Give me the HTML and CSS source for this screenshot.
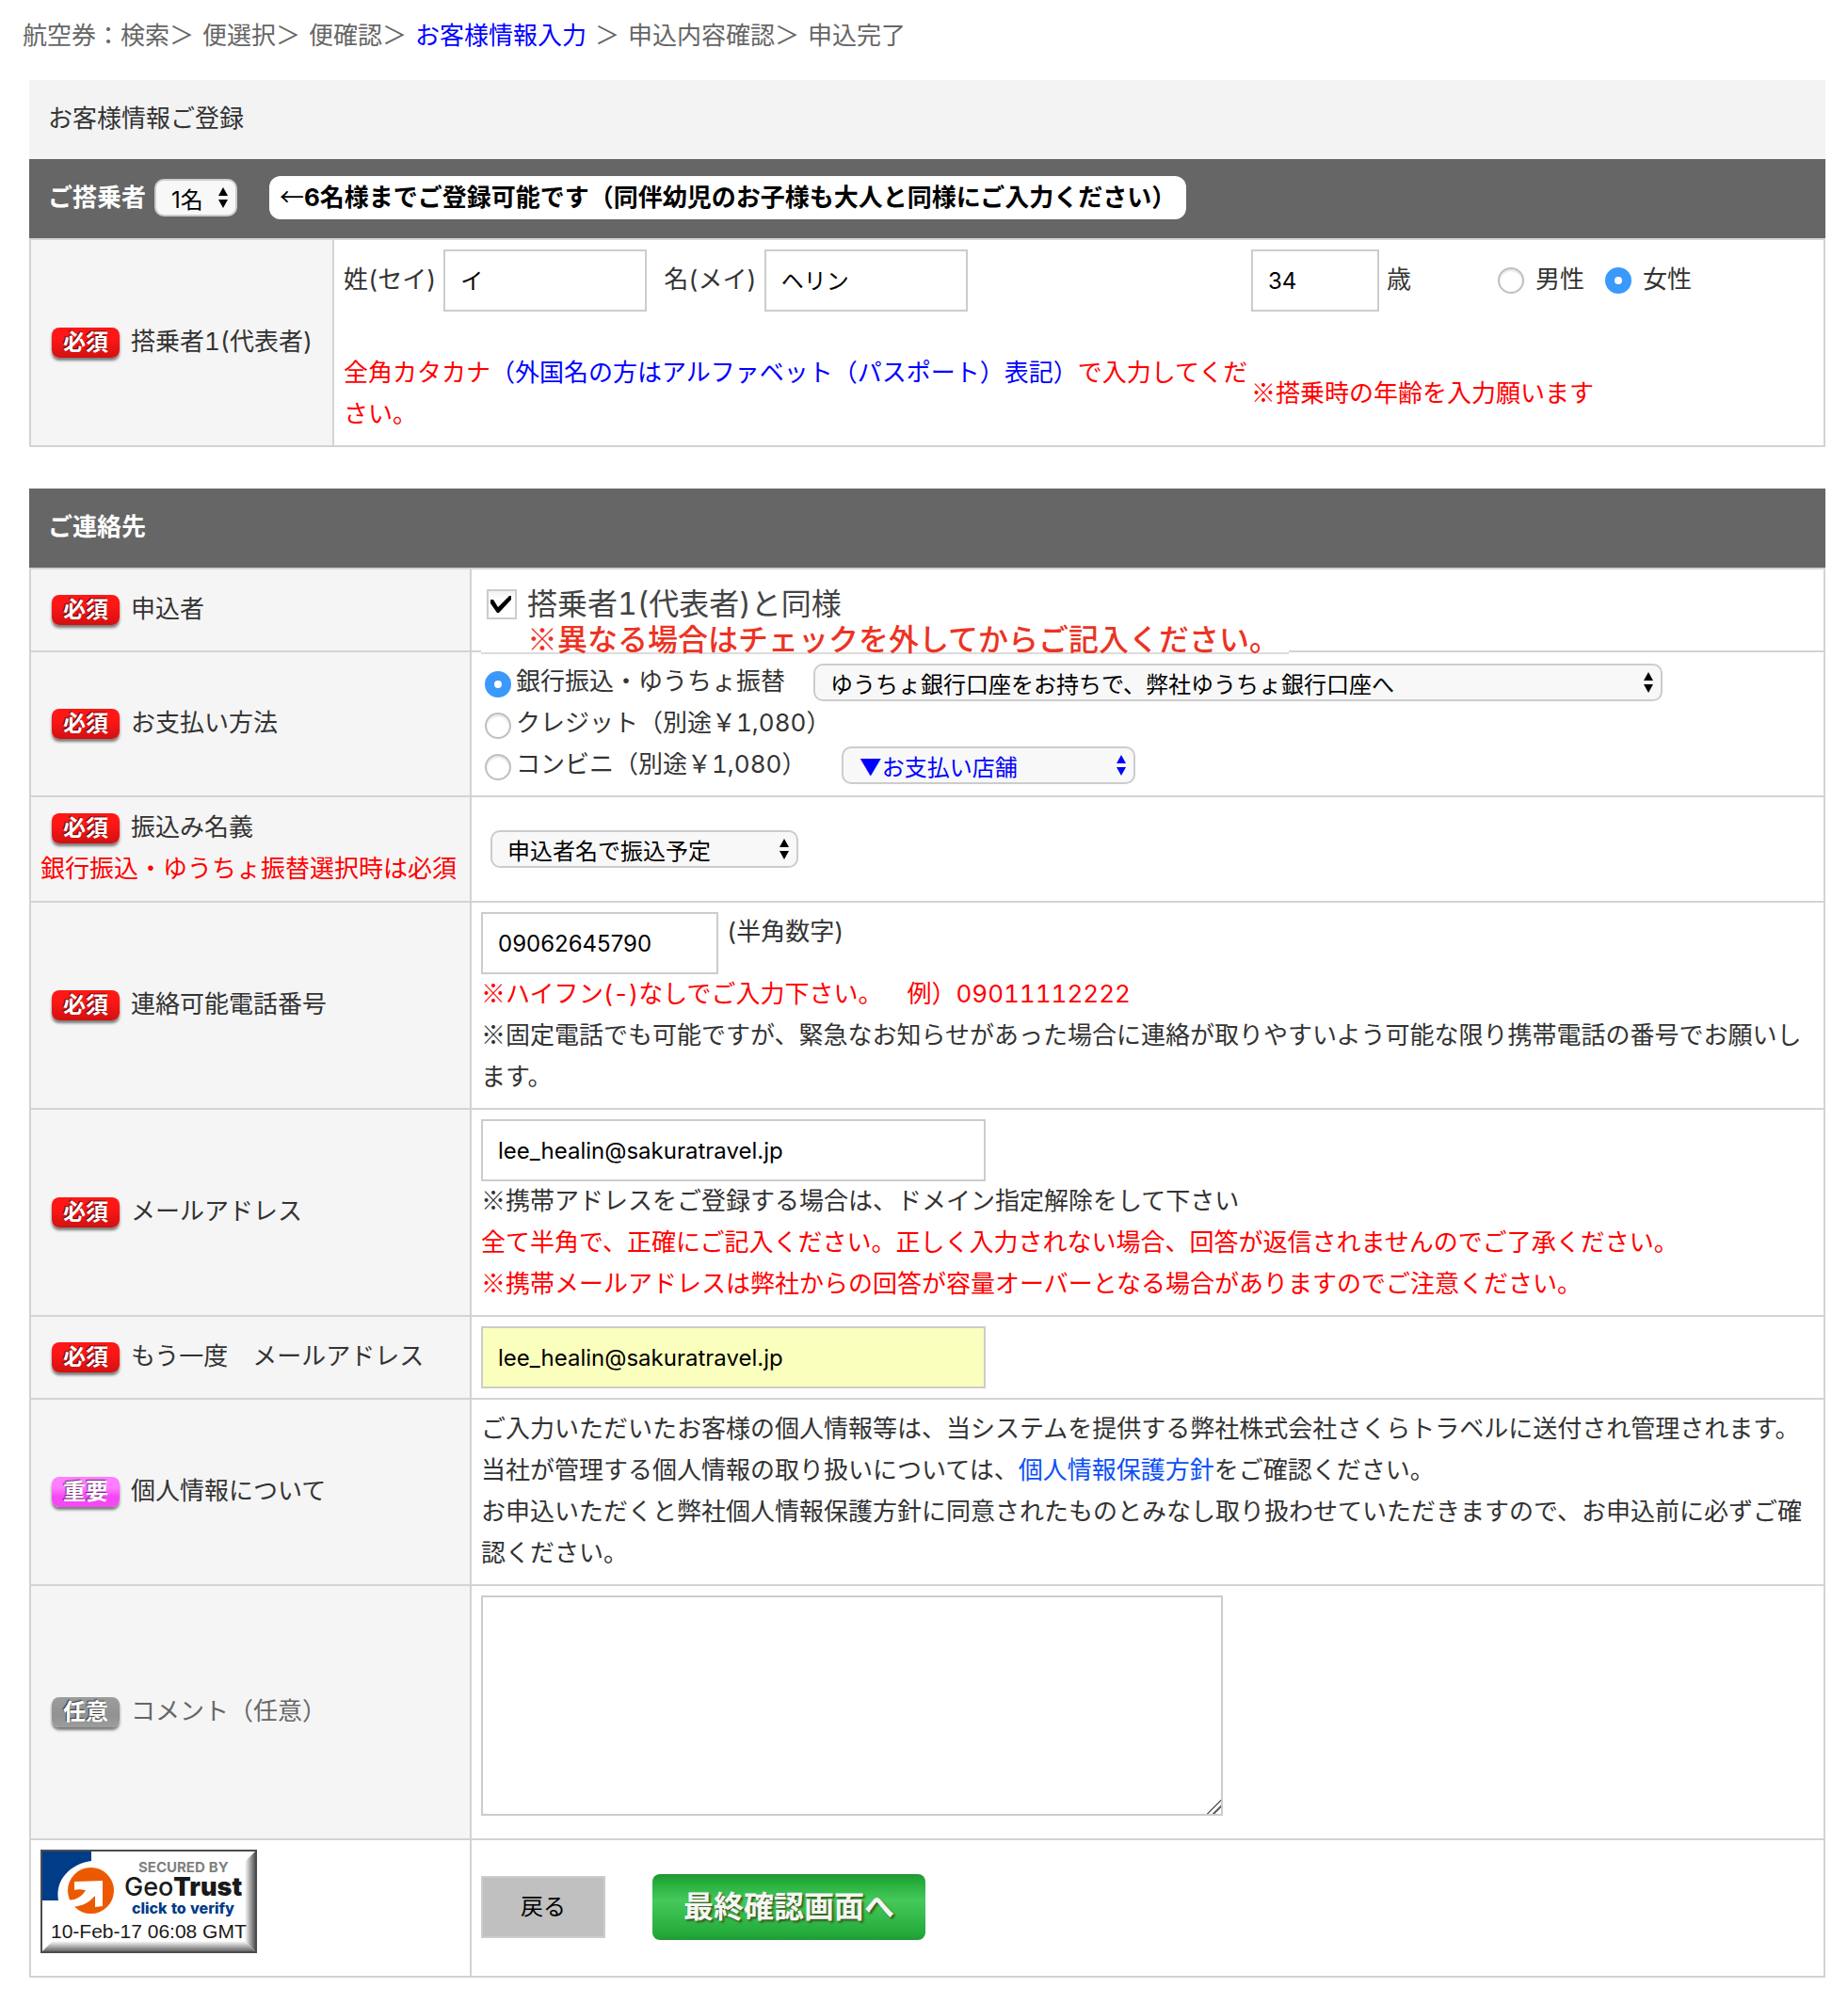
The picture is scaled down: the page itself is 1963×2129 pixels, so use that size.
FILE: index.html
```html
<!DOCTYPE html>
<html lang="ja">
<head>
<meta charset="utf-8">
<meta name="viewport" content="width=device-width, initial-scale=1">
<title>お客様情報入力</title>
<link rel="stylesheet" href="styles.css">
</head>
<body>
<nav class="steps">
  <span>航空券：検索＞</span>
  <span>便選択＞</span>
  <span>便確認＞</span>
  <span class="steps-current">お客様情報入力</span>
  <span>＞</span>
  <span>申込内容確認＞</span>
  <span>申込完了</span>
</nav>

<form class="entry">
  <section class="block">
    <h1 class="title">お客様情報ご登録</h1>
    <div class="bar">
      <label for="count">ご搭乗者</label>
      <span class="picker picker-count">
        <select id="count"><option>1名</option><option>2名</option><option>3名</option></select>
        <svg class="arrows" viewBox="0 0 12 22"><path d="M6 0l5 9H1zM6 22l5-9H1z"/></svg>
      </span>
      <span class="bar-note"><span class="mark">←</span>6名様までご登録可能です（同伴幼児のお子様も大人と同様にご入力ください）</span>
    </div>
    <table class="grid">
      <colgroup><col class="col-passenger"><col></colgroup>
      <tbody>
        <tr>
          <th scope="row"><span class="badge">必須</span>搭乗者1(代表者)</th>
          <td>
            <div class="passenger">
              <div class="names">
                <label for="sei">姓(セイ)</label>
                <input class="box box-name" id="sei" type="text" value="イ">
                <label class="second" for="mei">名(メイ)</label>
                <input class="box box-name" id="mei" type="text" value="ヘリン">
              </div>
              <div class="profile">
                <input class="box box-age" id="age" type="text" value="34">
                <label class="unit" for="age">歳</label>
                <input class="radio" id="male" type="radio" name="sex">
                <label class="sex" for="male">男性</label>
                <input class="radio" id="female" type="radio" name="sex" checked>
                <label class="sex" for="female">女性</label>
              </div>
              <p class="alert">全角カタカナ<span class="blue">（外国名の方はアルファベット（パスポート）表記）</span>で入力してください。</p>
              <p class="alert age-note"><span class="mark">※</span>搭乗時の年齢を入力願います</p>
            </div>
          </td>
        </tr>
      </tbody>
    </table>
  </section>

  <section class="block">
    <h2 class="bar">ご連絡先</h2>
    <table class="grid">
      <colgroup><col class="col-contact"><col></colgroup>
      <tbody>
        <tr>
          <th scope="row"><span class="badge">必須</span>申込者</th>
          <td>
            <div class="same">
              <input class="check" id="same" type="checkbox" checked>
              <label for="same">搭乗者1(代表者)と同様<span class="same-note"><span class="mark">※</span>異なる場合はチェックを外してからご記入ください。</span></label>
            </div>
          </td>
        </tr>
        <tr>
          <th scope="row"><span class="badge">必須</span>お支払い方法</th>
          <td>
            <div class="pay">
              <input class="radio" id="bank" type="radio" name="pay" checked>
              <label for="bank">銀行振込・ゆうちょ振替</label>
              <span class="picker picker-bank">
                <select aria-label="振込先口座"><option>ゆうちょ銀行口座をお持ちで、弊社ゆうちょ銀行口座へ</option></select>
                <svg class="arrows" viewBox="0 0 12 22"><path d="M6 0l5 9H1zM6 22l5-9H1z"/></svg>
              </span>
            </div>
            <div class="pay">
              <input class="radio" id="credit" type="radio" name="pay">
              <label for="credit">クレジット（別途￥1,080）</label>
            </div>
            <div class="pay">
              <input class="radio" id="store" type="radio" name="pay">
              <label for="store">コンビニ（別途￥1,080）</label>
              <span class="picker picker-store">
                <select aria-label="お支払い店舗"><option>▼お支払い店舗</option></select>
                <svg class="arrows" viewBox="0 0 12 22"><path d="M6 0l5 9H1zM6 22l5-9H1z"/></svg>
              </span>
            </div>
          </td>
        </tr>
        <tr>
          <th scope="row" class="tall"><span class="badge">必須</span>振込み名義<p class="alert">銀行振込・ゆうちょ振替選択時は必須</p></th>
          <td>
            <span class="picker picker-holder">
              <select aria-label="振込み名義"><option>申込者名で振込予定</option></select>
              <svg class="arrows" viewBox="0 0 12 22"><path d="M6 0l5 9H1zM6 22l5-9H1z"/></svg>
            </span>
          </td>
        </tr>
        <tr>
          <th scope="row"><span class="badge">必須</span><label for="tel">連絡可能電話番号</label></th>
          <td>
            <div class="phone">
              <input class="box box-tel" id="tel" type="tel" value="09062645790">
              <p>(半角数字)</p>
            </div>
            <p class="alert"><span class="mark">※</span>ハイフン(-)なしでご入力下さい。　例）09011112222</p>
            <p><span class="mark">※</span>固定電話でも可能ですが、緊急なお知らせがあった場合に連絡が取りやすいよう可能な限り携帯電話の番号でお願いします。</p>
          </td>
        </tr>
        <tr>
          <th scope="row"><span class="badge">必須</span><label for="mail">メールアドレス</label></th>
          <td>
            <input class="box box-mail" id="mail" type="text" value="lee_healin@sakuratravel.jp">
            <p><span class="mark">※</span>携帯アドレスをご登録する場合は、ドメイン指定解除をして下さい</p>
            <p class="alert">全て半角で、正確にご記入ください。正しく入力されない場合、回答が返信されませんのでご了承ください。</p>
            <p class="alert"><span class="mark">※</span>携帯メールアドレスは弊社からの回答が容量オーバーとなる場合がありますのでご注意ください。</p>
          </td>
        </tr>
        <tr>
          <th scope="row"><span class="badge">必須</span><label for="mail2">もう一度　メールアドレス</label></th>
          <td><input class="box box-mail filled" id="mail2" type="text" value="lee_healin@sakuratravel.jp"></td>
        </tr>
        <tr>
          <th scope="row"><span class="badge badge-pink">重要</span>個人情報について</th>
          <td>
            <p>ご入力いただいたお客様の個人情報等は、当システムを提供する弊社株式会社さくらトラベルに送付され管理されます。</p>
            <p>当社が管理する個人情報の取り扱いについては、<a class="link" href="#privacy">個人情報保護方針</a>をご確認ください。</p>
            <p>お申込いただくと弊社個人情報保護方針に同意されたものとみなし取り扱わせていただきますので、お申込前に必ずご確認ください。</p>
          </td>
        </tr>
        <tr>
          <th scope="row" class="optional"><span class="badge badge-gray">任意</span><label for="comment">コメント（任意）</label></th>
          <td><textarea class="box box-comment" id="comment"></textarea></td>
        </tr>
        <tr>
          <td>
            <a class="seal" href="#verify" aria-label="GeoTrust">
              <svg viewBox="0 0 230 110">
                <defs>
                  <linearGradient id="sealRight" x1="0" x2="1" y1="0" y2="0"><stop offset="0" stop-color="#fff"/><stop offset="1" stop-color="#555"/></linearGradient>
                  <linearGradient id="sealBottom" x1="0" x2="0" y1="0" y2="1"><stop offset="0" stop-color="#fff"/><stop offset="1" stop-color="#666"/></linearGradient>
                </defs>
                <rect x="1" y="1" width="228" height="108" fill="#fff"/>
                <path d="M228 2v106l-11-11V13z" fill="url(#sealRight)"/>
                <path d="M2 108h226l-11-11H13z" fill="url(#sealBottom)"/>
                <path d="M2 2h52v10C32 15 15 32 19 54H2z" fill="#003c87"/>
                <circle cx="53.500" cy="43.500" r="24.500" fill="#eb5a00"/>
                <path d="M36 34l30-1v27l-8 1V49C50 58 42 61 28 61v-8c8 2 16-3 20-10-6-1-9-1-12 0z" fill="#fff"/>
                <rect x="1" y="1" width="228" height="108" fill="none" stroke="#4a4d50" stroke-width="2"/>
                <text x="104" y="24" class="seal-top">SECURED BY</text>
                <text x="89" y="49" class="seal-name">Geo<tspan class="seal-heavy">Trust</tspan></text>
                <text x="97" y="68" class="seal-verify">click to verify</text>
                <text x="11" y="94" class="seal-date">10-Feb-17 06:08 GMT</text>
              </svg>
            </a>
          </td>
          <td>
            <div class="actions">
              <button class="back" type="button">戻る</button>
              <button class="next" type="submit">最終確認画面へ</button>
            </div>
          </td>
        </tr>
      </tbody>
    </table>
  </section>
</form>
</body>
</html>
```

FILE: styles.css
```css
* { box-sizing: border-box; }

body {
  margin: 0;
  padding: 16px 24px 28px;
  background: #fff;
  color: #333;
  font: 26px/44px Inter, "Noto Sans CJK JP", sans-serif;
  font-variant-numeric: tabular-nums;
  text-spacing-trim: space-all;
}

p, h1, h2 { margin: 0; font-size: inherit; }

.steps { display: flex; flex-wrap: wrap; gap: 0 9px; color: #666; }
.steps-current, .blue { color: #00f; }
.alert { color: #f00; }
.link { color: #0b50f5; text-decoration: none; }

/* Full-width symbols come from the Japanese face */
.mark { font-family: "Noto Sans CJK JP", sans-serif; font-weight: 400; line-height: 1; }

.entry { padding: 25px 0 0 7px; }
.block + .block { margin-top: 44px; }

.title {
  padding: 19px 20px 21px;
  background: #f3f3f3;
  font-weight: 400;
}

.bar {
  display: flex;
  align-items: center;
  height: 84px;
  padding: 0 20px 2px;
  background: #666;
  color: #fff;
  font-weight: 700;
}

.bar-note {
  margin-left: 34px;
  padding: 0 11px;
  border-radius: 12px;
  background: #fff;
  color: #000;
  line-height: 46px;
}

.grid {
  width: 100%;
  border-collapse: collapse;
  table-layout: fixed;
}

.grid th, .grid td {
  padding: 10px;
  border: 2px solid #d3d3d3;
  text-align: left;
}
.grid td p { margin: -1px 0 1px; }

.grid th { padding: 9px 10px 11px; background: #f5f5f5; font-weight: 400; }
.grid th.optional { color: #666; }
.grid th.tall { padding: 10px 10px 12px; }
.col-passenger { width: 322px; }
.col-contact { width: 468px; }

.badge {
  display: inline-block;
  width: 72px;
  height: 32px;
  margin: 0 12px;
  border-radius: 8px;
  background: linear-gradient(#ff1717 35%, #d21010);
  box-shadow: 0 3px 3px rgba(0, 0, 0, .5);
  color: #fff;
  font-size: 24px;
  font-weight: 700;
  line-height: 32px;
  text-align: center;
  text-shadow: -1px -1px 1px rgba(0, 0, 0, .6);
}
.badge-pink { background: linear-gradient(#ff7dff 35%, #f548f5 65%); }
.badge-gray { background: linear-gradient(#9c9c9c, #929292 60%, #9c9c9c); }

.box {
  display: block;
  height: 66px;
  padding: 0 16px;
  border: 2px solid #ccc;
  border-radius: 0;
  background: #fff;
  color: #000;
  font: 24px/28px Inter, "Noto Sans CJK JP", sans-serif;
}
.box-name { width: 216px; padding-bottom: 4px; }
.box-age { width: 136px; }
.box-tel { width: 252px; }
.box-mail { width: 536px; }
.box-comment { width: 788px; height: 234px; margin-bottom: 14px; }
.box-comment::-webkit-resizer {
  background: linear-gradient(135deg, transparent 48%, #666 48% 55%, transparent 55% 70%, #666 70% 77%, transparent 77%);
}
.filled { background: #faffbd; }

.passenger {
  display: grid;
  grid-template-columns: 964px 1fr;
  row-gap: 44px;
}
.names, .profile { display: flex; align-items: center; }
.names label, .profile label { padding-bottom: 2px; }
.names label { margin-right: 8px; }
.names .second { margin-left: 18px; }
.unit { width: 126px; padding-left: 8px; }
.sex { margin: 0 22px 0 12px; }
.age-note { align-self: center; }

.radio {
  appearance: none;
  flex: none;
  width: 28px;
  height: 28px;
  margin: 0;
  border: 2px solid #c0c0c0;
  border-radius: 50%;
  background: #fff;
  box-shadow: inset 0 2px 2px rgba(0, 0, 0, .1);
}
.radio:checked { border: 10px solid #3b99fc; box-shadow: none; }

.check {
  appearance: none;
  flex: none;
  width: 32px;
  height: 32px;
  margin: 3px 11px 0 0;
  border: 2px solid #ccc;
  background: linear-gradient(#f2f2f2, #fff 30%);
}
.check:checked::before {
  content: "";
  display: block;
  width: 28px;
  height: 28px;
  background: #000;
  clip-path: polygon(2px 9px, 5px 9px, 10px 17px, 22px 5px, 24px 5px, 24px 9px, 11px 23px, 9px 23px, 2px 13px);
}

.same {
  position: relative;
  display: flex;
  width: 858px;
  height: 80px;
  margin-bottom: -14px;
  padding: 8px 0 0 6px;
  border-bottom: 2px solid #dcdcdc;
  background: #fff;
  color: #444;
  font-size: 32px;
  line-height: 38px;
}
.same-note {
  display: block;
  color: #ec3323;
  font-weight: 500;
  white-space: nowrap;
}

.pay { display: flex; align-items: center; height: 44px; }
.pay label { padding-bottom: 2px; }
.pay .radio { margin: 4px 5px 0 4px; }

.picker { position: relative; display: block; height: 40px; }
.picker select {
  appearance: none;
  display: block;
  width: 100%;
  height: 40px;
  padding: 5px 16px 0;
  border: 2px solid #ccc;
  border-radius: 10px;
  background: #f8f8f8;
  color: #000;
  font: 24px/30px Inter, "Noto Sans CJK JP", sans-serif;
}
.arrows {
  position: absolute;
  top: 9px;
  right: 9px;
  width: 12px;
  height: 22px;
  pointer-events: none;
}
.picker-count { width: 88px; margin-left: 9px; }
.picker-bank { width: 902px; margin-left: 30px; }
.picker-store { width: 312px; margin-left: 38px; }
.picker-store select { color: #00f; }
.picker-store .arrows { fill: #00f; }
.picker-holder { width: 327px; margin-left: 10px; }

.phone { display: flex; gap: 9px; }

.seal { display: block; width: 230px; height: 110px; margin-bottom: 14px; }
.seal svg { display: block; width: 230px; height: 110px; }
.seal text { font-family: Inter, sans-serif; fill: #1a1a1a; }
.seal .seal-top { font-size: 15px; font-weight: 700; fill: #808080; }
.seal .seal-name { font-size: 27px; font-weight: 500; }
.seal .seal-heavy { font-weight: 900; }
.seal .seal-verify { font-size: 16px; font-weight: 800; fill: #003c87; }
.seal .seal-date { font-family: "Liberation Sans", sans-serif; font-size: 21px; }

.actions { display: flex; align-items: center; gap: 50px; padding-bottom: 2px; }
.back {
  width: 132px;
  height: 66px;
  padding: 0;
  border: 2px solid #ccc;
  background: #c0c0c0;
  color: #000;
  font: 24px/28px Inter, "Noto Sans CJK JP", sans-serif;
}
.next {
  width: 290px;
  height: 70px;
  padding: 0;
  border: 0;
  border-radius: 8px;
  background: linear-gradient(#249432, #25ad3c 12%, #45c95a 40%, #25ad3c 88%, #229a34);
  color: #f5f5f5;
  font: 700 32px/40px Inter, "Noto Sans CJK JP", sans-serif;
  text-shadow: 2px 2px 2px rgba(60, 50, 0, .7);
}
```
